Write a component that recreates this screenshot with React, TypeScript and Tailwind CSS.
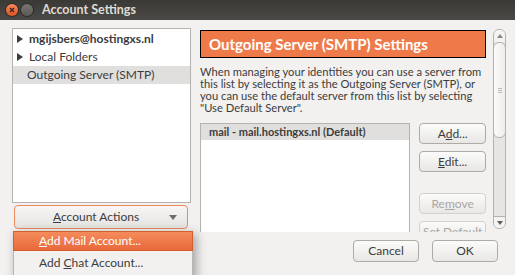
import React from "react";

const font = { fontFamily: "Lato, 'Open Sans', 'Noto Sans', sans-serif" };

function Btn({ children, disabled, className = "" }: { children: React.ReactNode; disabled?: boolean; className?: string }) {
  return (
    <div
      className={`flex items-center justify-center rounded-[4px] border bg-gradient-to-b from-[#fbfbfa] to-[#e8e7e5] text-[12px] ${
        disabled ? "border-[#d3d1ce] text-[#a9a7a4]" : "border-[#aeaba7] text-[#3c3c3c]"
      } ${className}`}
    >
      <span>{children}</span>
    </div>
  );
}

function Tri() {
  return (
    <svg width="6" height="8" viewBox="0 0 6 8" className="mr-[6px] ml-[4px]">
      <path d="M0 0 L6 4 L0 8 Z" fill="#3c3c3c" />
    </svg>
  );
}

export default function App() {
  return (
    <div className="relative w-[515px] h-[275px] overflow-hidden bg-[#f2f1f0] text-[#3c3c3c]" style={font}>
      {/* Title bar */}
      <div className="flex h-[20px] items-center bg-gradient-to-b from-[#3a3935] to-[#4a4945] pl-[6px]">
        <div className="flex h-[12px] w-[12px] items-center justify-center rounded-full bg-gradient-to-b from-[#f58a5c] to-[#de4f1f] shadow-[0_0_0_1px_#2e2d2a]">
          <svg width="6" height="6" viewBox="0 0 6 6">
            <path d="M1 1 L5 5 M5 1 L1 5" stroke="#3a2418" strokeWidth="1.3" />
          </svg>
        </div>
        <div className="ml-[3px] h-[12px] w-[12px] rounded-full bg-gradient-to-b from-[#77766f] to-[#5a5954] shadow-[0_0_0_1px_#2e2d2a]" />
        <div className="ml-[9px] text-[12.5px] font-bold text-[#dfdbd2]">Account Settings</div>
      </div>

      {/* Main area */}
      <div className="flex h-[212px]">
        {/* Left column */}
        <div className="flex w-[195px] flex-col pl-[12px] pt-[8px]">
          <div className="h-[175px] w-[179px] border border-[#b5b3b0] bg-white pt-[1px] text-[12px]">
            <div className="flex h-[18px] items-center font-bold">
              <Tri />
              <span>mgijsbers@hostingxs.nl</span>
            </div>
            <div className="flex h-[18px] items-center">
              <Tri />
              <span>Local Folders</span>
            </div>
            <div className="flex h-[18px] items-center bg-[#e0dfdd] pl-[14px]">
              <span>Outgoing Server (SMTP)</span>
            </div>
          </div>
          <div className="ml-[2px] mt-[2px] flex h-[24px] w-[174px] items-center rounded-[4px] border border-[#ec8a5f] bg-gradient-to-b from-[#f7f6f5] to-[#e4e3e1] text-[12px]">
            <div className="flex-1 pl-[38px]">
              <span className="underline">A</span>ccount Actions
            </div>
            <svg width="8" height="5" viewBox="0 0 8 5" className="mr-[10px]">
              <path d="M0 0 L8 0 L4 5 Z" fill="#6e6d6a" />
            </svg>
          </div>
        </div>

        {/* Right pane */}
        <div className="flex h-[212px] flex-1 pt-[8px]">
          <div className="h-[204px] w-[291px] overflow-hidden pl-[5px] pt-[2px]">
            <div className="flex h-[28px] w-[286px] items-center border border-black bg-[#ef7a49] pl-[8px] text-[15px] font-bold text-white">
              <span>Outgoing Server (SMTP) Settings</span>
            </div>
            <div className="mt-[8px] text-[11.2px] leading-[12px] text-[#3c3c3c]">
              When managing your identities you can use a server from
              <br />
              this list by selecting it as the Outgoing Server (SMTP), or
              <br />
              you can use the default server from this list by selecting
              <br />
              "Use Default Server".
            </div>
            <div className="mt-[9px] flex">
              <div className="h-[120px] w-[211px] border border-[#b5b3b0] bg-white">
                <div className="flex h-[16px] items-center bg-[#e0dfdd] pl-[8px] text-[11px] font-bold">
                  <span>mail - mail.hostingxs.nl (Default)</span>
                </div>
              </div>
              <div className="ml-[9px] flex w-[67px] flex-col">
                <Btn className="h-[21px]">
                  A<span className="underline">d</span>d...
                </Btn>
                <Btn className="mt-[7px] h-[21px]">
                  <span className="underline">E</span>dit...
                </Btn>
                <Btn disabled className="mt-[21px] h-[21px]">
                  Re<span className="underline">m</span>ove
                </Btn>
                <Btn disabled className="mt-[7px] h-[21px]">
                  Set Default
                </Btn>
              </div>
            </div>
          </div>
          {/* Scrollbar */}
          <div className="ml-[7px] mt-[1px] flex h-[200px] w-[13px] flex-col overflow-hidden rounded-[6px] border border-[#b3b1ae] bg-[#e6e5e3]">
            <div className="flex h-[12px] items-center justify-center bg-[#f4f3f2]">
              <svg width="6" height="4" viewBox="0 0 6 4">
                <path d="M0 4 L6 4 L3 0 Z" fill="#8a8884" />
              </svg>
            </div>
            <div className="h-[96px] rounded-[6px] border border-[#b3b1ae] bg-gradient-to-r from-[#fbfbfa] to-[#eeedeb] -mx-[1px] flex items-center justify-center">
              <div className="flex flex-col gap-[1px]">
                <div className="h-px w-[4px] bg-[#bdbbb8]" />
                <div className="h-px w-[4px] bg-[#bdbbb8]" />
                <div className="h-px w-[4px] bg-[#bdbbb8]" />
              </div>
            </div>
            <div className="flex-1" />
            <div className="flex h-[12px] items-center justify-center border-t border-[#b3b1ae] bg-[#f4f3f2]">
              <svg width="6" height="4" viewBox="0 0 6 4">
                <path d="M0 0 L6 0 L3 4 Z" fill="#5e5d5a" />
              </svg>
            </div>
          </div>
        </div>
      </div>

      {/* Bottom */}
      <div className="flex h-[43px] justify-end gap-[13px] pr-[17px] pt-[8px]">
        <Btn className="h-[22px] w-[66px]">Cancel</Btn>
        <Btn className="h-[22px] w-[66px]">OK</Btn>
      </div>

      {/* Dropdown menu */}
      <div className="absolute left-[13px] top-[231px] w-[180px] h-[50px] border border-[#b9b7b4] bg-[#f2f1f0] text-[12px] shadow-[3px_3px_10px_rgba(0,0,0,0.35)]">
        <div className="-mx-[1px] -mt-[1px] flex h-[20px] items-center border border-[#d0612f] bg-gradient-to-b from-[#f48b5c] to-[#e8693a] pl-[25px] text-white">
          <span>
            <span className="underline">A</span>dd Mail Account...
          </span>
        </div>
        <div className="mt-[1px] flex h-[22px] items-center pl-[25px]">
          <span>
            Add <span className="underline">C</span>hat Account...
          </span>
        </div>
      </div>
    </div>
  );
}
